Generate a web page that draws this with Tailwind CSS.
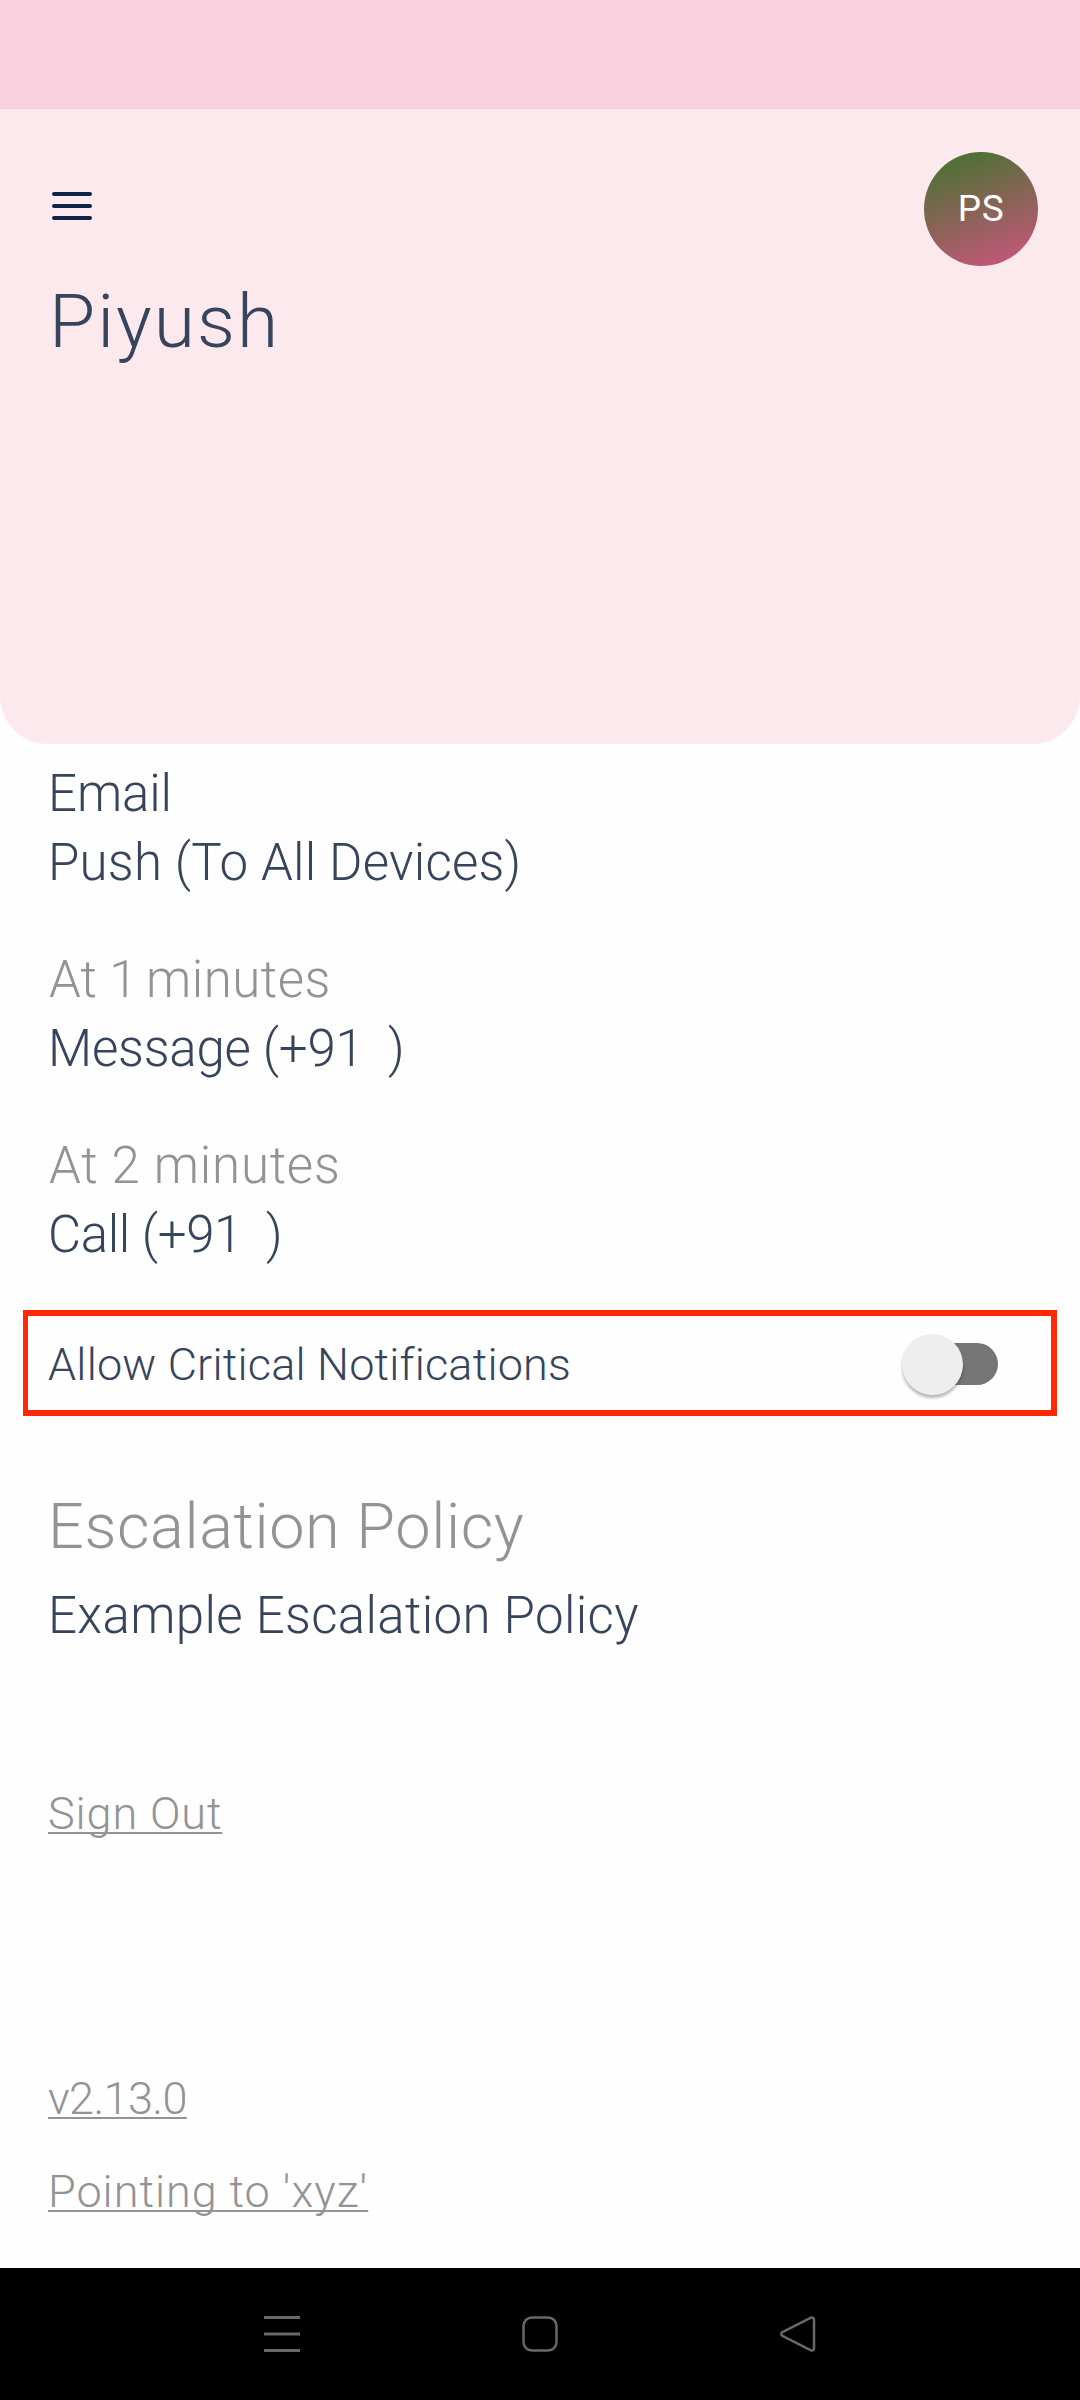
<!DOCTYPE html>
<html lang="en">
<head>
<meta charset="utf-8">
<title>Profile</title>
<script src="https://cdn.jsdelivr.net/npm/@tailwindcss/browser@4"></script>
</head>
<body class="bg-white">
<div class="flex h-[2400px] w-[1080px] flex-col overflow-hidden bg-[#fefefe] font-[Roboto,sans-serif] font-light text-[#36445c]">
  <div class="h-[744px] shrink-0 overflow-hidden rounded-b-[48px] bg-[#fce9ee]">
    <div class="h-[109px] border-b border-[#f0ccd8] bg-[#f8d2df]"></div>
    <div class="flex items-start justify-between pt-[43px] pr-[42px] pl-[52px]">
      <svg class="mt-10 h-7 w-10" viewBox="0 0 40 28" fill="none" stroke="#0f2347" stroke-width="4" stroke-linecap="round"><path d="M2 2H38M2 14H38M2 26H38"/></svg>
      <div class="flex size-[114px] items-center justify-center rounded-full bg-linear-[160deg] from-[#3f742c] from-0% to-[#cf5480] to-100% text-[37px] font-normal tracking-[0.5px] text-white">PS</div>
    </div>
    <h1 class="mt-[10px] pl-[49px] text-[75px] leading-[90px] tracking-[2.02px]">Piyush</h1>
  </div>

  <main class="flex grow flex-col pt-[15px] text-[51px] leading-[69px]">
    <section class="pl-12">
      <p class="tracking-[-0.13px]">Email</p>
      <p class="tracking-[0.22px]">Push (To All Devices)</p>
    </section>
    <section class="mt-12 pl-12">
      <p class="pl-px text-[#939393]">At 1<span class="-ml-1"> </span><span class="tracking-[0.5px]">minutes</span></p>
      <p class="tracking-[-0.23px] whitespace-pre">Message (+91  )</p>
    </section>
    <section class="mt-12 pl-12">
      <p class="pl-px tracking-[0.77px] text-[#939393]">At 2 minutes</p>
      <p class="tracking-[-0.39px] whitespace-pre">Call (+91  )</p>
    </section>

    <div class="mt-[41px] ml-[23px] flex h-[106px] w-[1034px] items-center justify-between border-[6px] border-l-[5px] border-[#ff2a04] pt-[2px] pr-[53px] pl-[20px]">
      <span class="text-[45px] tracking-[0.2px]">Allow Critical Notifications</span>
      <div class="flex h-[61px] w-24 items-center">
        <div class="z-10 size-[61px] shrink-0 rounded-full bg-[#eeeeee] shadow-[0_3px_3px_rgba(0,0,0,0.28)]"></div>
        <div class="-ml-[49px] h-[42px] w-[84px] shrink-0 rounded-full bg-[#757575]"></div>
      </div>
    </div>

    <section class="mt-[69px] pl-12">
      <h2 class="text-[63px] leading-[84px] tracking-[0.6px] text-[#939393]">Escalation Policy</h2>
      <p class="mt-3 tracking-[0.34px]">Example Escalation Policy</p>
    </section>

    <div class="mt-[134px] flex flex-col items-start pl-12 text-[45px] leading-[60px] text-[#939393]">
      <a class="tracking-[0.9px] underline decoration-2 underline-offset-[3px] [text-decoration-skip-ink:none]">Sign Out</a>
      <a class="mt-[225px] tracking-[-0.6px] underline decoration-2 underline-offset-[3px] [text-decoration-skip-ink:none]">v2.13.0</a>
      <a class="mt-[33px] tracking-[0.98px] underline decoration-2 underline-offset-[3px] [text-decoration-skip-ink:none]">Pointing to 'xyz'</a>
    </div>
  </main>

  <nav class="flex h-[132px] shrink-0 items-start justify-between bg-black px-[264px] pt-12">
    <svg class="h-9 w-9" viewBox="0 0 36 36" fill="none" stroke="#686868" stroke-width="3"><path d="M0 1.5H36M0 18H36M0 34.5H36"/></svg>
    <svg class="h-9 w-9" viewBox="0 0 36 36" fill="none" stroke="#686868" stroke-width="2.5"><rect x="1.5" y="1.5" width="33" height="33" rx="8.5"/></svg>
    <svg class="h-9 w-9" viewBox="0 0 36 36" fill="none" stroke="#686868" stroke-width="2.5" stroke-linejoin="round"><path d="M30.5 1.8 2.4 16.1Q0 18 2.4 19.9L30.5 34.2Q34 35.2 34 32.2V3.8Q34 .8 30.5 1.8Z"/></svg>
  </nav>
</div>
</body>
</html>
